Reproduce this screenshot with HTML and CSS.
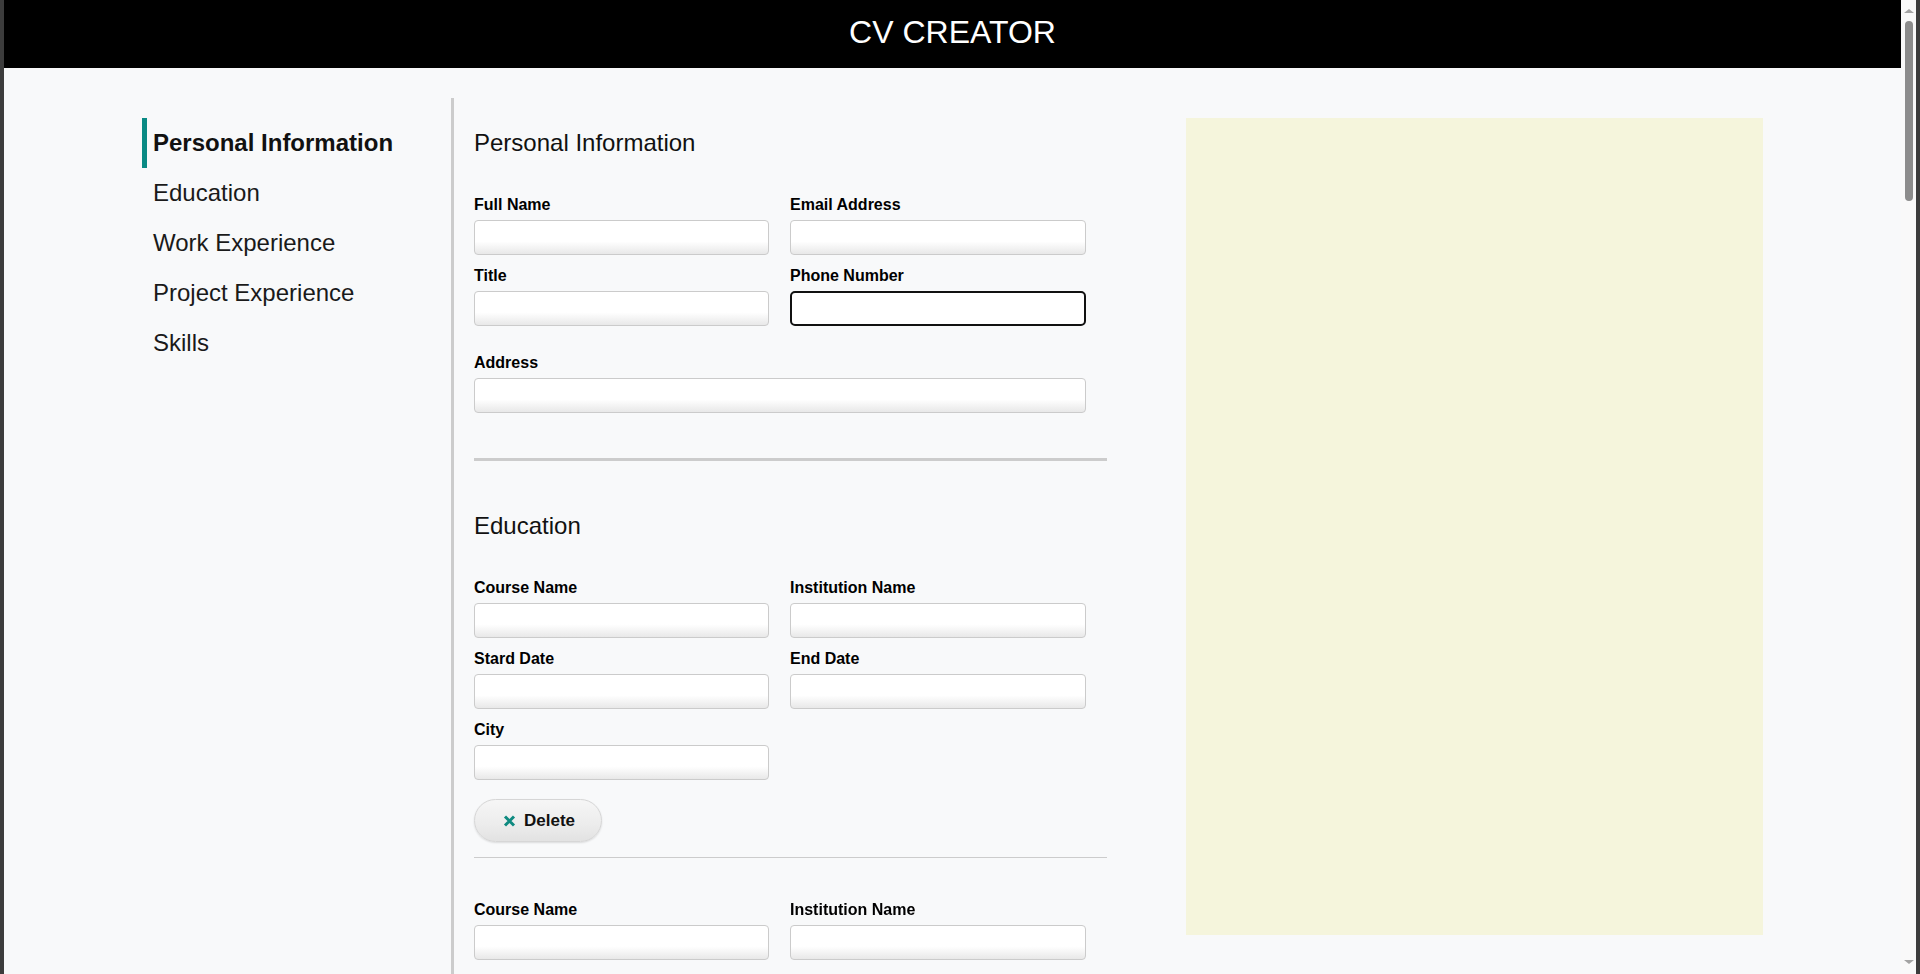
FILE: index.html
```html
<!DOCTYPE html>
<html lang="en">
<head>
<meta charset="utf-8">
<title>CV Creator</title>
<link rel="stylesheet" href="styles.css">
</head>
<body>
<div class="window">
  <div class="frame-edge"></div>
  <div class="viewport">
    <header class="app-header">
      <h1 class="app-title">CV CREATOR</h1>
    </header>
    <main class="layout">
      <nav class="sidebar">
        <ul class="nav-list">
          <li class="nav-item active">Personal Information</li>
          <li class="nav-item">Education</li>
          <li class="nav-item">Work Experience</li>
          <li class="nav-item">Project Experience</li>
          <li class="nav-item">Skills</li>
        </ul>
      </nav>
      <div class="editor">
        <section class="form-section personal">
          <h2 class="section-title">Personal Information</h2>
          <div class="field-grid">
            <div class="field"><label class="field-label">Full Name</label><input class="field-input" type="text"></div>
            <div class="field"><label class="field-label">Email Address</label><input class="field-input" type="text"></div>
            <div class="field"><label class="field-label">Title</label><input class="field-input" type="text"></div>
            <div class="field"><label class="field-label">Phone Number</label><input class="field-input is-active" type="text" autofocus></div>
          </div>
          <div class="field field-wide"><label class="field-label">Address</label><input class="field-input" type="text"></div>
        </section>
        <section class="form-section education">
          <h2 class="section-title">Education</h2>
          <div class="entry">
            <div class="field-grid">
              <div class="field"><label class="field-label">Course Name</label><input class="field-input" type="text"></div>
              <div class="field"><label class="field-label">Institution Name</label><input class="field-input" type="text"></div>
              <div class="field"><label class="field-label">Stard Date</label><input class="field-input" type="text"></div>
              <div class="field"><label class="field-label">End Date</label><input class="field-input" type="text"></div>
              <div class="field"><label class="field-label">City</label><input class="field-input" type="text"></div>
            </div>
            <button class="delete-btn" type="button"><svg class="delete-icon" width="13" height="12" viewBox="0 0 13 12"><path d="M2 1.5 L11 10.5 M11 1.5 L2 10.5" stroke="#0e8a80" stroke-width="3" stroke-linecap="butt" fill="none"/></svg>Delete</button>
          </div>
          <div class="entry">
            <div class="field-grid">
              <div class="field"><label class="field-label">Course Name</label><input class="field-input" type="text"></div>
              <div class="field"><label class="field-label">Institution Name</label><input class="field-input" type="text"></div>
            </div>
          </div>
        </section>
      </div>
      <aside class="preview"></aside>
    </main>
  </div>
  <div class="scrollbar">
    <span class="arrow arrow-up"></span>
    <span class="thumb"></span>
    <span class="scroll-spacer"></span>
    <span class="arrow arrow-down"></span>
  </div>
  <div class="frame-edge"></div>
</div>
</body>
</html>
```
FILE: styles.css
```css
html, body {
  margin: 0;
  padding: 0;
  height: 974px;
  overflow: hidden;
}

body {
  font-family: "Liberation Sans", Arial, sans-serif;
  color: #111;
  background: #3c3c3c;
}

.window {
  display: flex;
  height: 974px;
}

.frame-edge {
  width: 4px;
  flex: none;
  background: #3c3c3c;
}

.viewport {
  flex: 1;
  min-width: 0;
  display: flex;
  flex-direction: column;
  background: #f8f9fa;
  overflow: hidden;
}

.app-header {
  flex: none;
  height: 68px;
  background: #000;
  display: flex;
  align-items: center;
  justify-content: center;
}

.app-title {
  margin: 0;
  color: #fff;
  font-size: 32px;
  font-weight: normal;
  line-height: 37px;
  padding-bottom: 4px;
}

.layout {
  display: flex;
  align-items: stretch;
  padding: 30px 138px 0;
}

.sidebar {
  width: 312px;
  flex: none;
  box-sizing: border-box;
  border-right: 3px solid #cccccc;
  padding-top: 20px;
}

.nav-list {
  list-style: none;
  margin: 0;
  padding: 0;
}

.nav-item {
  font-size: 24px;
  line-height: 50px;
  height: 50px;
  border-left: 5px solid transparent;
  padding-left: 6px;
  color: #1a1a1a;
}

.nav-item.active {
  border-left-color: #0a8a84;
  font-weight: bold;
  color: #111;
}

.editor {
  width: 633px;
  flex: none;
  padding: 31px 0 0 20px;
}

.section-title {
  margin: 0 0 39px;
  font-size: 24px;
  font-weight: normal;
  color: #111;
}

.field-grid {
  display: grid;
  grid-template-columns: 295px 296px;
  column-gap: 21px;
  row-gap: 12px;
}

.field-label {
  display: block;
  font-size: 16px;
  font-weight: bold;
  color: #000;
  margin-bottom: 6px;
}

.field-input {
  display: block;
  width: 100%;
  height: 35px;
  box-sizing: border-box;
  margin: 0;
  padding: 0 8px;
  border: 1px solid #cbcbcb;
  border-radius: 4px;
  background: linear-gradient(to bottom, #ffffff 0%, #ffffff 62%, #e8e8e8 100%);
  font-family: "Liberation Sans", Arial, sans-serif;
  font-size: 16px;
  color: #111;
}

.field-input:focus {
  outline: none;
}

.field-input.is-active {
  border: 2px solid #111;
  border-radius: 5px;
  padding: 0 2px;
  background: #fff;
}

.field-wide {
  margin-top: 28px;
  width: 612px;
}

.form-section.personal {
  padding-bottom: 45px;
  border-bottom: 3px solid #cccccc;
}

.form-section.education {
  padding-top: 51px;
}

.entry {
  padding-bottom: 15px;
  border-bottom: 1px solid #cccccc;
}

.entry + .entry {
  padding-top: 43px;
  border-bottom: none;
}

.delete-btn {
  display: inline-flex;
  align-items: center;
  gap: 8px;
  margin-top: 19px;
  height: 43px;
  box-sizing: border-box;
  padding: 0 26px 0 28px;
  border: 1px solid #d6d6d6;
  border-radius: 22px;
  background: linear-gradient(to bottom, #f6f6f6 0%, #ececec 60%, #e2e2e2 100%);
  box-shadow: 0 1px 2px rgba(0, 0, 0, 0.12);
  font-family: "Liberation Sans", Arial, sans-serif;
  font-size: 17px;
  font-weight: bold;
  color: #111;
  cursor: pointer;
}

.delete-icon {
  flex: none;
}

.preview {
  flex: none;
  align-self: flex-start;
  width: 577px;
  height: 817px;
  margin: 20px 0 0 79px;
  background: #f5f5dc;
}

.scrollbar {
  width: 15px;
  flex: none;
  background: #f9f9f9;
  display: flex;
  flex-direction: column;
  align-items: center;
}

.arrow {
  width: 0;
  height: 0;
  border-left: 5px solid transparent;
  border-right: 5px solid transparent;
}

.arrow-up {
  margin-top: 9px;
  border-bottom: 4px solid #a3a3a3;
}

.arrow-down {
  margin-bottom: 10px;
  border-top: 4px solid #a3a3a3;
}

.thumb {
  margin-top: 8px;
  width: 8px;
  height: 180px;
  border-radius: 4px;
  background: #8c8c8c;
}

.scroll-spacer {
  flex: 1;
}
```
